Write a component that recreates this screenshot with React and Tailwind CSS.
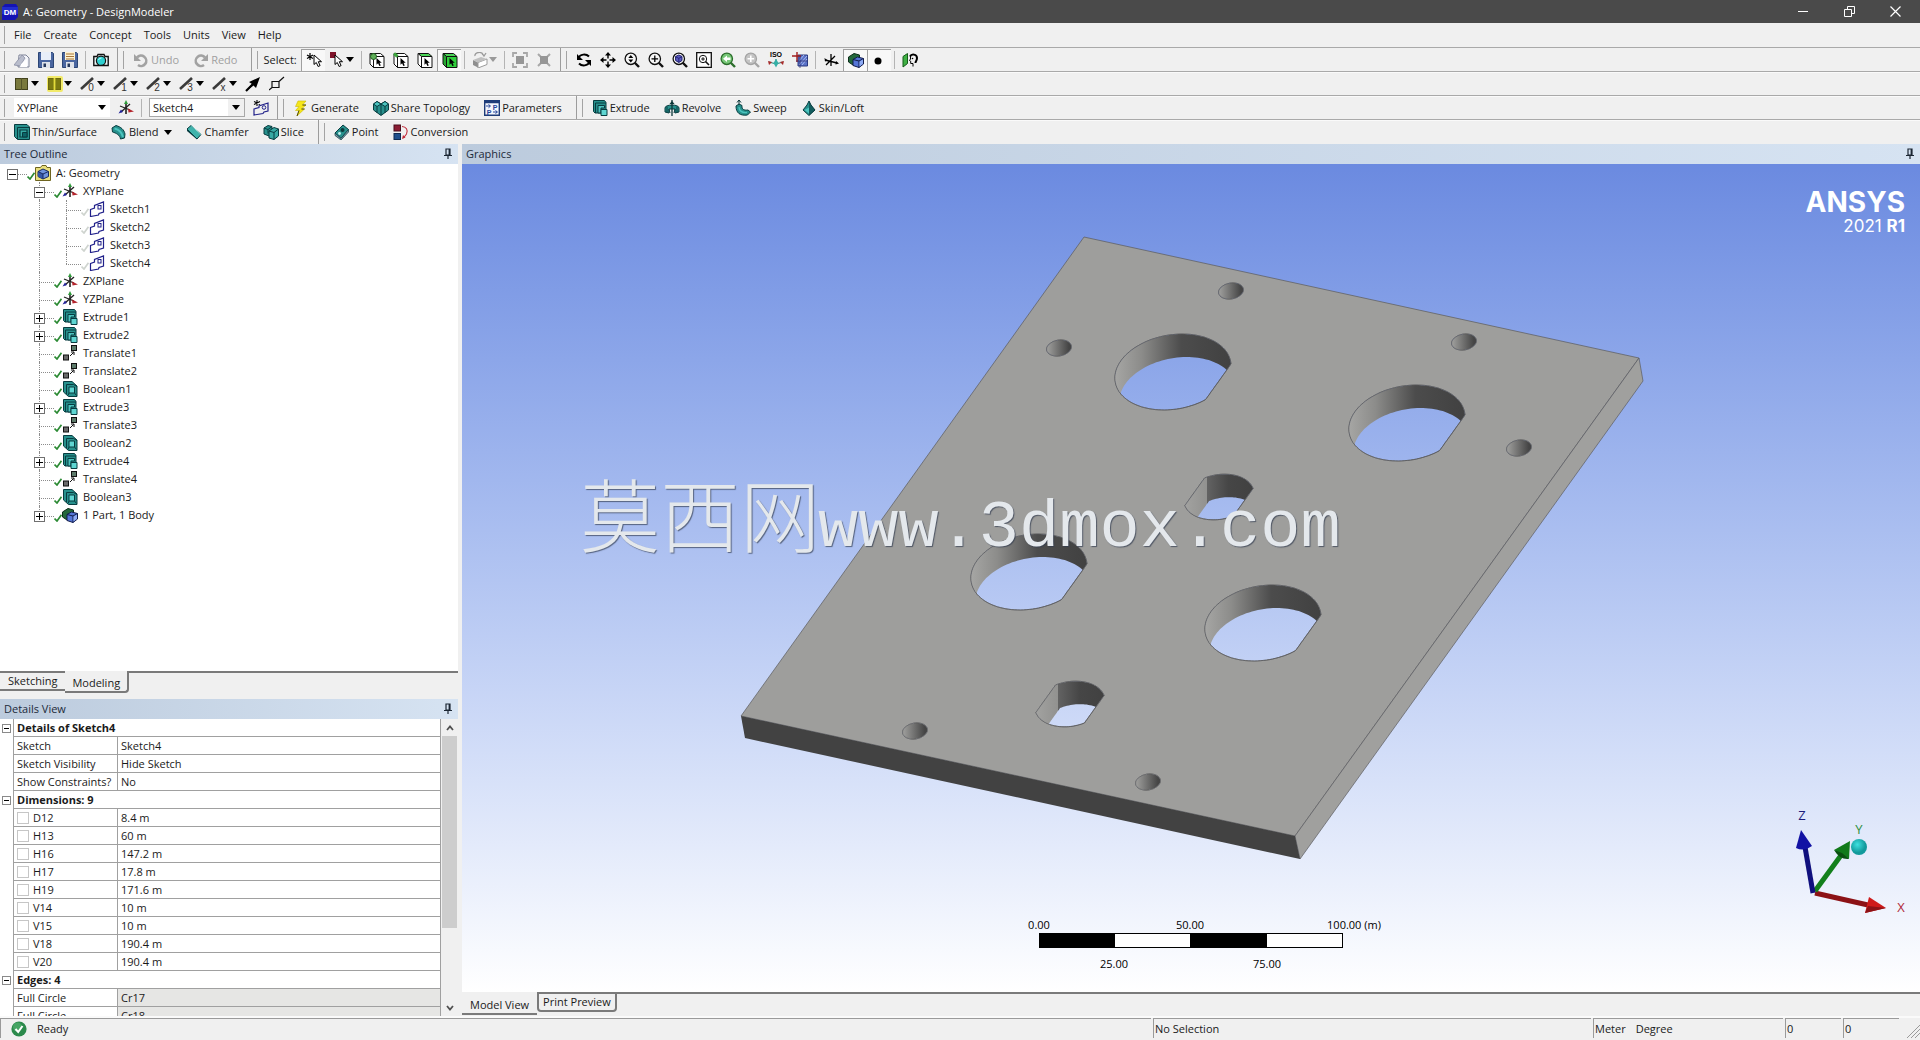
import React from "react";

/* ---------- icon helpers ---------- */
const I = ({ children, w = 16, className = "" }) => (
  <svg width={w} height={16} viewBox={`0 0 ${w} 16`} className={`shrink-0 ${className}`} aria-hidden="true">
    {children}
  </svg>
);
const Caret = ({ color = "#000" }) => (
  <svg width="8" height="5" viewBox="0 0 8 5" className="shrink-0" aria-hidden="true">
    <path d="M0 0h8L4 5z" fill={color} />
  </svg>
);

const TEAL = "#27908c";
const TEAL_D = "#083c40";
const TEAL_L = "#4cc4bf";

const NewIcon = () => (
  <I>
    <path d="M5 3h7l3 3v9H4z" fill="#f4f5fa" stroke="#7c8296" />
    <path d="M0 13L8 3l3 3-5 8z" fill="#b9bdcc" stroke="#8a8fa3" strokeWidth=".8" />
    <path d="M7 12l6-5v8H6z" fill="#fff" />
  </I>
);
const SaveIcon = ({ all }) => (
  <I>
    <path d="M.5.5h14l1 1v14H.5z" fill="#4a66a0" stroke="#2c4675" />
    <path d="M3 0h10v8H3z" fill={all ? "#fff3d0" : "#e8eef8"} />
    {all && <path d="M4 2h8M4 4.500h8M4 7h8" stroke="#a8763a" strokeWidth="1.200" />}
    <path d="M4 10h8v6H4z" fill="#dfe3ea" />
    <path d="M5.500 11.500h2.500v3.500h-2.500z" fill="#26385c" />
  </I>
);
const CameraIcon = () => (
  <I>
    <path d="M.8 4.500h3.200l1-2h6l1 2h3.200v9H.8z" fill="#e9f6f6" stroke="#111" strokeWidth="1.400" />
    <circle cx="8" cy="8.800" r="4.600" fill="#2fd0d0" stroke="#111" strokeWidth="1.200" />
    <path d="M5.500 8a3 3 0 0 1 3-2" stroke="#c8ffff" fill="none" />
  </I>
);
const UndoIcon = ({ redo }) => (
  <I>
    <g transform={redo ? "matrix(-1 0 0 1 16 0)" : undefined} fill="none" stroke="#a2a2a2">
      <path d="M4 5.500a5.200 5.200 0 1 1 1 7.500" strokeWidth="2.600" />
      <path d="M1 2v7h7z" fill="#a2a2a2" stroke="none" />
    </g>
  </I>
);
const arrowPath = "M0 0v9.500l2.300-2 1.800 4 2-.9-1.800-3.900h3.200z";
const SelectCursor = () => (
  <I>
    <path d="M4 1v7M1 3l6 3.500M7 3L1 6.500" stroke="#000" strokeWidth="1.200" />
    <g transform="translate(8 3)"><path d={arrowPath} fill="#fff" stroke="#000" /></g>
  </I>
);
const BoxCursor = () => (
  <I>
    <rect x="1" y="0" width="6" height="6" fill="#7d1128" />
    <g transform="translate(6 3)"><path d={arrowPath} fill="#fff" stroke="#000" /></g>
  </I>
);
const SelCube = ({ mode }) => (
  <I>
    <path d="M4.500 4.500h10.500v11H4.500z" fill={mode === "body" ? "#30cf3c" : "#fff"} stroke="#111" />
    <path d="M4.500 4.500L1 1.500h10.500l3.500 3z" fill={mode === "face" || mode === "body" ? "#4ad456" : "#fff"} stroke="#111" />
    <path d="M1 1.500v10.500l3.500 3.500v-11z" fill={mode === "body" ? "#27a832" : "#fff"} stroke="#111" />
    {mode === "point" && <circle cx="4.500" cy="4.500" r="3" fill="#5fae58" stroke="#1d5a1d" />}
    {mode === "edge" && <path d="M1 1.500l3.500 3" stroke="#3fa63f" strokeWidth="3" />}
    <g transform="translate(7.500 6) scale(.7)"><path d={arrowPath} fill="#000" /></g>
  </I>
);
const GreyCube = () => (
  <I>
    <path d="M1 8l5 2.500v5L1 13z" fill="#8e8e8e" />
    <path d="M6 10.500L15 7v5.500L6 16z" fill="#fff" stroke="#9a9a9a" />
    <path d="M1 8l8-3 6 2-9 3.500z" fill="#c0c0c0" />
    <path d="M3 4a4 3 0 0 1 8-1M10 1l2 3 2-3" stroke="#9a9a9a" fill="none" strokeWidth="1.300" />
  </I>
);
const GreyExpand = ({ inward }) => (
  <I>
    {inward ? (
      <path d="M2 2l3 3M14 2l-3 3M2 14l3-3M14 14l-3-3" stroke="#a8a8a8" strokeWidth="2" />
    ) : (
      <path d="M1 5V1h4M11 1h4v4M15 11v4h-4M5 15H1v-4" stroke="#a8a8a8" strokeWidth="1.800" fill="none" />
    )}
    <rect x="4" y="4" width="8" height="8" fill="#969696" />
  </I>
);
const RotateIcon = () => (
  <I>
    <path d="M2.500 6C4 2 10 1.500 13 4.500M13.500 10C12 14 6 14.500 3 11.500" stroke="#000" strokeWidth="2" fill="none" />
    <path d="M1 2v6h6zM15 14V8H9z" fill="#000" />
  </I>
);
const PanIcon = () => (
  <I>
    <path d="M8 2v12M2 8h12" stroke="#000" strokeDasharray="4.500 3" strokeWidth="1.400" />
    <path d="M8 0l3 3.500H5zM8 16l3-3.500H5zM0 8l3.500-3v6zM16 8l-3.500-3v6z" fill="#000" />
  </I>
);
const Mag = ({ children, ring = "#111", fill = "#f6f6f6" }) => (
  <I>
    <path d="M10.500 10.500L15 15" stroke={ring} strokeWidth="2.400" />
    <circle cx="6.800" cy="6.800" r="5.700" fill={fill} stroke={ring} strokeWidth="1.300" />
    {children}
  </I>
);
const ZoomIcon = () => <Mag><path d="M6.800 3l2.500 3h-5zM6.800 10.600l2.500-3h-5z" fill="#000" /></Mag>;
const ZoomPlus = () => <Mag><path d="M6.800 3.500v6.600M3.500 6.800h6.600" stroke="#000" strokeWidth="1.300" /></Mag>;
const ZoomFit = () => <Mag><path d="M6.800 3l3.200 1.500v4L6.800 10.500 3.600 8.500v-4z" fill="#5a5ac0" stroke="#1c1c6e" /><path d="M3.600 4.800l3.200 1.500L10 4.800M6.800 6.300v4" stroke="#1c1c6e" fill="none" strokeWidth=".8" /></Mag>;
const ZoomPrev = () => <Mag ring="#2c6e2c" fill="#78c878"><path d="M3 6.800l4-3.200v2h3.500v2.500H7v2z" fill="#fff" /></Mag>;
const ZoomNext = () => <Mag ring="#a4a4a4" fill="#c4c4c4"><path d="M6.800 3.500v6.600M3.500 6.800h6.600" stroke="#fff" strokeWidth="1.600" /></Mag>;
const ZoomBox = () => (
  <I>
    <path d="M.7.7h14.600v14.600H.7z" fill="#fff" stroke="#111" strokeWidth="1.300" />
    <circle cx="7" cy="7" r="3.700" fill="none" stroke="#111" />
    <path d="M9.500 9.500l3.500 3.500" stroke="#111" strokeWidth="1.600" />
    <path d="M5.200 7h3.600M7 5.200v3.600" stroke="#111" />
  </I>
);
const IsoIcon = () => (
  <svg width="18" height="16" viewBox="0 0 18 16" className="shrink-0" aria-hidden="true">
    <text x="9" y="5" textAnchor="middle" fontSize="7" fontWeight="700" fontFamily="Liberation Sans">ISO</text>
    <path d="M9 12V7M9 12l-7-2M9 12l7-2" stroke="#2a8f88" strokeWidth="1.200" />
    <path d="M6.500 11L9 7l2.500 4L9 15.500z" fill="#35b0a6" />
    <path d="M1 9l4 1-3 3zM17 9l-4 1 3 3z" fill="#a82a2a" />
  </svg>
);
const LookAt = () => (
  <I>
    <path d="M6 3h9.500v11H6z" fill="#5a72c8" stroke="#2c3a80" />
    <path d="M7 13l8-9M10 13l5-6M7 9l5-6" stroke="#a9bbef" />
    <path d="M5 0v10M0 4h9" stroke="#a01c1c" strokeWidth="1.400" />
    <path d="M8 4v12M4 9h11" stroke="#2a2a6a" strokeWidth=".7" />
  </I>
);
const AxisBlack = () => (
  <I>
    <path d="M8 2v12M2 8l12 3M3 13l9-9" stroke="#000" strokeWidth="1.300" />
    <path d="M1.500 6l3.500 2.500-3 1zM13 9l3 2.500-3.500 1z" fill="#000" />
  </I>
);
const BodyIcon = () => (
  <I>
    <path d="M.5 5L6 1.500l5.500 1.500v6L5 13 .5 10z" fill="#23683b" stroke="#0c2c1a" />
    <path d="M5 7.500l4.500-2.500 6 1.500V12L11 15.500 5 13.500z" fill="#5576d8" stroke="#101b4a" />
    <path d="M5 7.500l6 1.500 4.500-2.500M11 9v6.500" stroke="#101b4a" fill="none" />
    <path d="M11.500 9.500l3.500-2v4.300l-3.500 2.700z" fill="#8eabf4" />
  </I>
);
const DotIcon = () => <I><circle cx="6" cy="9" r="3.500" fill="#000" /></I>;
const FaceIcon = () => (
  <I>
    <path d="M1 4.500l4.500-3v10L1 15z" fill="#3fb044" stroke="#145c18" />
    <path d="M8 4.500c1.500-3 7-2.500 7 1.500 0 3-1.500 3-1.500 5" stroke="#000" strokeWidth="2" fill="none" />
    <path d="M8.500 4v3l-1 1.500 1.200.7v2.300h2.300v3" stroke="#000" fill="none" />
    <circle cx="10.500" cy="6.500" r=".8" fill="#000" />
  </I>
);

const ShareSquare = ({ y }) => (
  <I>
    {y && <rect x="0" y="0" width="16" height="16" rx="2" fill="#f2ea6a" />}
    <rect x="1.500" y="2.500" width="12" height="11" fill={y ? "#7c7a12" : "#7a7a3e"} stroke={y ? "#6d6a10" : "#43431e"} />
    <path d="M7.500 2v12" stroke={y ? "#e4dc3c" : "#55552a"} strokeWidth={y ? "1.800" : "1"} />
  </I>
);
const EdgeNum = ({ n }) => (
  <I>
    <path d="M1 13L13 2" stroke="#3a3a3a" strokeWidth="2.600" />
    <text x="11" y="15" textAnchor="middle" fontSize="10" fontFamily="Liberation Sans" fill="#333">{n}</text>
  </I>
);
const FatArrow = () => <I><path d="M1 15L7 8 4 6 15 1l-4 11-2.500-2.500z" fill="#000" /><path d="M1 15l7-7" stroke="#000" strokeWidth="2.200" /></I>;
const VertexIcon = () => <I><path d="M3 5.500h7v6H3zM3 11.500L0 14M10 5.500L15 1" fill="none" stroke="#111" strokeWidth="1.200" /></I>;

const AxisIcon = () => (
  <I>
    <path d="M8 2v12" stroke="#222" strokeWidth="1.600" />
    <path d="M8 0l2 4H6z" fill="#2f9a3a" />
    <path d="M2 6l10 4" stroke="#222" strokeWidth="1.300" />
    <path d="M10 8.500l6 3-5.500 1z" fill="#b3242c" />
    <path d="M12 4l-9 8" stroke="#222" strokeWidth="1.300" />
    <path d="M.5 13.500L3 9.500l2 2.500z" fill="#22229a" />
  </I>
);
const SketchNew = () => (
  <I>
    <path d="M4 0v6M1 1.500l6 3M7 1.500l-6 3" stroke="#000" strokeWidth="1.100" />
    <path d="M1 9l5-1.500V6l9-3v8l-4 1-1 1.500-9 1.500z" fill="none" stroke="#23238a" strokeWidth="1.200" />
    <circle cx="11" cy="7.500" r="1.800" fill="none" stroke="#23238a" />
  </I>
);
const BoltIcon = () => (
  <I>
    <path d="M5 1h8L9.500 5H13L8.500 9h3L4 16l2-5.500H2.500L6 6.500H2.500z" fill="#f5e61a" stroke="#c9b806" strokeWidth=".6" />
    <path d="M9.500 5H13M8.500 9h3M6 10.500L4 16" stroke="#3c3600" strokeWidth=".9" />
  </I>
);
const ShareIcon = () => (
  <I>
    <path d="M.5 4L4 1.500 8 4l4-2.500L15.500 4v6L8 15.500.5 10z" fill={TEAL} stroke={TEAL_D} />
    <path d="M.5 4L4 6.500 8 4l4 2.500L15.500 4 12 1.500 8 4 4 1.500z" fill={TEAL_L} stroke={TEAL_D} />
    <path d="M4 6.500V13M12 6.500V13M8 4v11" stroke={TEAL_D} />
  </I>
);
const ParamIcon = () => (
  <I>
    <path d="M.7.7h14.600v14.600H.7z" fill="#f4f6fc" stroke="#1e3c78" strokeWidth="1.400" />
    <path d="M1 2h14" stroke="#1e3c78" strokeWidth="2.500" />
    <path d="M2 6h4M4.500 4.500L6.500 6 4.500 7.800M9 12h4M11.500 10.500l2 1.500-2 1.500" stroke="#23459a" fill="none" />
    <text x="11" y="9.500" textAnchor="middle" fontSize="7" fontWeight="700" fontFamily="Liberation Sans" fill="#23459a">P</text>
    <text x="5" y="15" textAnchor="middle" fontSize="7" fontWeight="700" fontFamily="Liberation Sans" fill="#23459a">P</text>
  </I>
);
const ExtrudeIcon = () => (
  <I>
    <path d="M1.500.5h11l1.500 2V13H3l-1.500-1.500z" fill={TEAL} stroke={TEAL_D} />
    <path d="M3.500 3H14M3.500 3v10" stroke={TEAL_D} />
    <path d="M6 5.500h6.500V8H9v5H6z" fill={TEAL_L} stroke={TEAL_D} />
    <path d="M9 9.500h6v6H9z" fill="#5fd6d2" stroke={TEAL_D} />
  </I>
);
const RevolveIcon = () => (
  <I>
    <path d="M1 8c0-4 14-4 14 0v4l-4 1V9H5v4l-4-1z" fill={TEAL} stroke={TEAL_D} />
    <path d="M5 9l1 4M11 9l-1 4M3 6.500v6M13 6.500v6" stroke={TEAL_D} />
    <path d="M8 0v16" stroke="#0b3638" strokeWidth="1.300" />
    <path d="M8 1L5.500 4h5z" fill="#0b3638" />
  </I>
);
const SweepIcon = () => (
  <I>
    <path d="M1 6l3-2 3 1.500c-.5 4 2 5 6 4.500l2.500 2-3 3C5 16 1 13 1 6z" fill={TEAL} stroke={TEAL_D} />
    <path d="M4 7c0 4 3 6 8 5.500" stroke={TEAL_L} fill="none" strokeWidth="1.400" />
    <path d="M4 5V0M2 2.500L4 0l2 2.500" stroke="#0b3638" fill="none" />
  </I>
);
const LoftIcon = () => (
  <I>
    <path d="M8 1l2 4 4 5-6 5.500L2 10l4-5z" fill={TEAL} stroke={TEAL_D} />
    <path d="M8 1v14.500l6-5.500-4-5z" fill={TEAL_D} opacity=".6" />
    <path d="M3.500 10L8 7.500v6z" fill={TEAL_L} />
  </I>
);
const ThinIcon = () => (
  <I>
    <path d="M.5.5h12.500l2.500 2.500v12.500H3.500L.5 12.500z" fill={TEAL} stroke={TEAL_D} />
    <path d="M3.500 3.500h12M3.500 3.500V15" stroke={TEAL_D} />
    <path d="M6 6h7v7H6z" fill="#37aaa4" stroke={TEAL_D} strokeWidth="1.200" />
    <path d="M8.500 8.500H13V13H8.500z" fill="#0c6468" stroke={TEAL_D} />
  </I>
);
const BlendIcon = () => (
  <I>
    <path d="M1 4l4-2.500c5 1.500 8 4 9 8.500l-.5 4-4 1C9 11 5 9 1.500 8z" fill={TEAL} stroke={TEAL_D} />
    <path d="M3.500 4.500c4.500 1 7.500 4 8.500 8.500" stroke={TEAL_L} strokeWidth="2" fill="none" />
  </I>
);
const ChamferIcon = () => (
  <I>
    <path d="M1 5l4-3.500 10 9-4 4.500z" fill="#3fb3ac" stroke={TEAL_D} />
    <path d="M5 1.500l10 9" stroke="#8ce0da" />
    <path d="M1 5v2l10 8.500V15z" fill={TEAL_D} />
  </I>
);
const SliceIcon = () => (
  <I>
    <path d="M1 4l4-2.500 4 1V10l-3 2-5-2z" fill={TEAL} stroke={TEAL_D} />
    <path d="M6 7l5-3.500L15.500 5v7L11 15.500 6 14z" fill="#37aaa4" stroke={TEAL_D} />
    <path d="M6 7l5 1.500L15.500 5M11 8.500v7M1 4l4 1.500 4-3M5 5.500v4" stroke={TEAL_D} fill="none" />
  </I>
);
const PointIcon = () => (
  <I>
    <path d="M1 9L9 1l5.500 4.500L7 14.500z" fill={TEAL} stroke={TEAL_D} />
    <path d="M1 9v2.500l6 4.500 7.500-8V5.500L7 14.500z" fill="#7d98a8" stroke={TEAL_D} strokeWidth=".7" />
    <circle cx="8.500" cy="6" r="2" fill="#0c3a3c" />
    <circle cx="5.500" cy="9.500" r="1.400" fill="#c8f0ee" />
  </I>
);
const ConversionIcon = () => (
  <I>
    <rect x="1" y="1" width="6.500" height="6" fill="#8b1d34" stroke="#4a0d1b" />
    <rect x="1" y="9.500" width="6.500" height="6" fill="#1f4f8c" stroke="#0f2a50" />
    <path d="M9 2.500c4 0 6.500 3.500 4.500 7.500l-3 4" stroke="#c22b3a" fill="none" strokeWidth="1.100" />
    <path d="M9 15l1-4 2.500 2.500z" fill="#c22b3a" />
  </I>
);
const TranslateIcon = () => (
  <I>
    <rect x="9.500" y=".5" width="5" height="5" fill="#5c7a6a" stroke="#111" />
    <rect x="1.500" y="10" width="5" height="5" fill="#6a6a6a" stroke="#111" />
    <path d="M8 11l3.500-3.500M9 7h3v3" stroke="#111" fill="none" />
  </I>
);
const BooleanIcon = () => (
  <I>
    <path d="M1.500.5h8.500l5 4.500v10.500H6.500L1.500 11z" fill={TEAL} stroke={TEAL_D} />
    <path d="M4.500 3.500h7l3.500 2M4.500 3.500V13" stroke={TEAL_D} fill="none" />
    <path d="M7 6h5.500v6H7z" fill="#5fd6d2" stroke={TEAL_D} />
    <path d="M7 12l-1 2.500M12.500 12l2 2.500" stroke={TEAL_D} />
  </I>
);
const SketchIcon = () => (
  <I>
    <path d="M1.500 8.500l4-1.500V4.500l9-3.500v10l-4.500 1.500-.5 1.500-8 1.500z" fill="#fff" stroke="#20208a" strokeWidth="1.200" />
    <rect x="9" y="4.500" width="3" height="3.500" fill="none" stroke="#20208a" />
  </I>
);
const GeometryIcon = () => (
  <I>
    <path d="M.5 2.500h5l1.500-2h4l1 2h3.500v13H.5z" fill="#e9df7c" stroke="#6e6420" />
    <path d="M3 6.500L8 4l5.500 2.500v5L8 14l-5-2.500z" fill="#6f92dc" stroke="#182a60" />
    <path d="M3 6.500L8 9v5l-5-2.500z" fill="#3557a8" />
    <path d="M3 6.500L8 9l5.500-2.500M8 9v5" stroke="#182a60" fill="none" />
  </I>
);
const PinIcon = () => (
  <svg width="10" height="12" viewBox="0 0 10 12" aria-hidden="true">
    <path d="M3 1h4v6H3zM1 7.500h8M5 7.500V11M6.200 1v6" stroke="#1b2633" strokeWidth="1.200" fill="none" />
  </svg>
);
const Check = ({ pale }) => (
  <svg width="8" height="8" viewBox="0 0 8 8" className="mt-1.5 shrink-0" aria-hidden="true">
    <path d="M.5 4.500L3 7 7.500.8" stroke={pale ? "#cfd4cf" : "#2c8a34"} strokeWidth="1.700" fill="none" />
  </svg>
);

/* ---------- toolbar parts ---------- */
const Grip = () => (
  <span className="flex h-full w-2.5 shrink-0 items-center pl-1"><span className="h-[18px] w-px bg-[#a3a3a3]" /></span>
);
const Sep = () => (
  <span className="flex h-full w-[7px] shrink-0 items-center justify-center"><span className="h-[18px] w-px bg-[#b4b4b4]" /></span>
);
const Break = () => (
  <span className="flex h-full w-4 shrink-0 items-center gap-[5px] pl-1">
    <span className="h-full w-px bg-[#9c9c9c]" />
    <span className="h-[18px] w-px bg-[#a3a3a3]" />
  </span>
);
const IB = ({ label, children, active }) => (
  <button
    type="button"
    aria-label={label}
    className={`flex h-[22px] w-6 shrink-0 items-center justify-center ${active ? "border-l border-t border-[#a0a0a0] bg-[#f8f8f8]" : ""}`}
  >
    {children}
  </button>
);
const DB = ({ label, children, color }) => (
  <button type="button" aria-label={label} className="flex h-[22px] w-[33px] shrink-0 items-center gap-px pl-1">
    {children}
    <Caret color={color} />
  </button>
);
const LB = ({ icon, children, disabled, caret }) => (
  <button type="button" disabled={disabled} className="flex h-[22px] shrink-0 items-center gap-0.5 whitespace-nowrap pl-1 pr-2.5 disabled:text-[#a0a0a0]">
    {icon}
    <span>{children}</span>
    {caret && <span className="pl-1"><Caret /></span>}
  </button>
);
const Row = ({ children }) => (
  <div className="flex h-6 items-center border-b border-[#a9a9a9] shadow-[0_1px_0_#fafafa]">{children}</div>
);
const Combo = ({ label, value, boxed }) => (
  <span className={`relative flex h-[19px] w-24 shrink-0 items-center bg-white ${boxed ? "border border-[#a8a8a8]" : ""}`}>
    <select aria-label={label} className="h-full w-full appearance-none bg-transparent pl-[3px] outline-none">
      <option>{value}</option>
    </select>
    <span className={`pointer-events-none absolute right-0 flex h-full w-4 items-center justify-center ${boxed ? "bg-[#f0f0f0]" : ""}`}>
      <Caret />
    </span>
  </span>
);

const PanelHeader = ({ title }) => (
  <div className="flex h-5 shrink-0 items-center justify-between bg-linear-to-r from-[#bccbdd] to-[#d6e3f2] pl-1 pr-[5px] text-[#1c2a3a]">
    <h2>{title}</h2>
    <button type="button" aria-label={`Pin ${title}`}><PinIcon /></button>
  </div>
);

/* ---------- tree ---------- */
const ICONS = { axis: AxisIcon, sketch: SketchIcon, extrude: ExtrudeIcon, translate: TranslateIcon, boolean: BooleanIcon, body: BodyIcon, geometry: GeometryIcon };
const TREE = [
  { d: 0, t: "A: Geometry", i: "geometry", x: "-" },
  { d: 1, t: "XYPlane", i: "axis", x: "-" },
  { d: 2, t: "Sketch1", i: "sketch" },
  { d: 2, t: "Sketch2", i: "sketch" },
  { d: 2, t: "Sketch3", i: "sketch" },
  { d: 2, t: "Sketch4", i: "sketch", last: true },
  { d: 1, t: "ZXPlane", i: "axis" },
  { d: 1, t: "YZPlane", i: "axis" },
  { d: 1, t: "Extrude1", i: "extrude", x: "+" },
  { d: 1, t: "Extrude2", i: "extrude", x: "+" },
  { d: 1, t: "Translate1", i: "translate" },
  { d: 1, t: "Translate2", i: "translate" },
  { d: 1, t: "Boolean1", i: "boolean" },
  { d: 1, t: "Extrude3", i: "extrude", x: "+" },
  { d: 1, t: "Translate3", i: "translate" },
  { d: 1, t: "Boolean2", i: "boolean" },
  { d: 1, t: "Extrude4", i: "extrude", x: "+" },
  { d: 1, t: "Translate4", i: "translate" },
  { d: 1, t: "Boolean3", i: "boolean" },
  { d: 1, t: "1 Part, 1 Body", i: "body", x: "+", last: true },
];
const Guide = ({ vertical, last, branch, box }) => (
  <span className="relative h-[18px] w-[27px] shrink-0">
    {vertical && <span className={`absolute left-3 top-0 border-l border-dotted border-[#8c8c8c] ${last ? "h-2.5" : "h-[18px]"}`} />}
    {branch && <span className="absolute left-3 right-0 top-2.5 border-t border-dotted border-[#8c8c8c]" />}
    {box && (
      <button type="button" aria-label={box === "+" ? "Expand" : "Collapse"} className="absolute left-[7px] top-[5px] h-[11px] w-[11px] border border-[#707070] bg-white">
        <span className="absolute left-px right-px top-1 h-px bg-black" />
        {box === "+" && <span className="absolute bottom-px left-1 top-px w-px bg-black" />}
      </button>
    )}
  </span>
);
const TreeRow = ({ n }) => {
  const Ic = ICONS[n.i];
  return (
    <li className="flex h-[18px] items-center">
      {n.d > 0 && <Guide />}
      {n.d > 1 && <Guide vertical />}
      <Guide vertical={n.d > 0} last={n.last} branch box={n.x} />
      <Check pale={n.d > 1} />
      <Ic />
      <span className="pl-[5px]">{n.t}</span>
    </li>
  );
};

/* ---------- details ---------- */
const DETAILS = [
  { h: "Details of Sketch4" },
  { k: "Sketch", v: "Sketch4" },
  { k: "Sketch Visibility", v: "Hide Sketch" },
  { k: "Show Constraints?", v: "No" },
  { h: "Dimensions: 9" },
  { k: "D12", v: "8.4 m", c: true },
  { k: "H13", v: "60 m", c: true },
  { k: "H16", v: "147.2 m", c: true },
  { k: "H17", v: "17.8 m", c: true },
  { k: "H19", v: "171.6 m", c: true },
  { k: "V14", v: "10 m", c: true },
  { k: "V15", v: "10 m", c: true },
  { k: "V18", v: "190.4 m", c: true },
  { k: "V20", v: "190.4 m", c: true },
  { h: "Edges: 4" },
  { k: "Full Circle", v: "Cr17", g: true },
  { k: "Full Circle", v: "Cr18", g: true },
];
const Details = () => (
  <div className="flex h-[297px] overflow-hidden bg-white">
    <div className="min-w-0 flex-1 overflow-hidden">
      <table className="w-full table-fixed border-separate border-spacing-0">
        <colgroup>
          <col className="w-3.5" />
          <col className="w-[104px]" />
          <col />
        </colgroup>
        <tbody>
          {DETAILS.map((r, i) => (
            <tr key={i} className="h-[18px]">
              <td className="border-r border-[#a0a0a0] p-0 pl-0.5">
                {r.h && (
                  <button type="button" aria-label={`Collapse ${r.h}`} className="flex h-[9px] w-[9px] items-center justify-center border border-[#8a8a8a]">
                    <span className="h-px w-[5px] bg-black" />
                  </button>
                )}
              </td>
              {r.h ? (
                <th colSpan={2} className="border-b border-r border-[#a0a0a0] p-0 pl-[3px] text-left font-bold leading-4">{r.h}</th>
              ) : (
                <>
                  <td className="whitespace-nowrap border-b border-r border-[#a0a0a0] p-0 pl-[3px] leading-4">
                    {r.c ? (
                      <label className="flex items-center gap-1">
                        <input type="checkbox" className="h-3 w-3 appearance-none border border-[#c6c6c6] bg-white" />
                        {r.k}
                      </label>
                    ) : r.k}
                  </td>
                  <td className={`border-b border-r border-[#a0a0a0] p-0 pl-[3px] leading-4 ${r.g ? "bg-[#e6e6e4]" : ""}`}>{r.v}</td>
                </>
              )}
            </tr>
          ))}
        </tbody>
      </table>
    </div>
    <div className="flex w-[17px] shrink-0 flex-col items-center bg-[#f0f0f0]">
      <button type="button" aria-label="Scroll up" className="flex h-[17px] items-center">
        <svg width="8" height="6" viewBox="0 0 8 6"><path d="M1 5l3-3.500L7 5" stroke="#505050" strokeWidth="1.800" fill="none" /></svg>
      </button>
      <div className="h-48 w-[15px] bg-[#cdcdcd]" />
      <div className="flex-1" />
      <button type="button" aria-label="Scroll down" className="flex h-[17px] items-center">
        <svg width="8" height="6" viewBox="0 0 8 6"><path d="M1 1l3 3.500L7 1" stroke="#505050" strokeWidth="1.800" fill="none" /></svg>
      </button>
    </div>
  </div>
);

/* ---------- model ---------- */
const U = [2.694, 0.587];
const V = [-1.345, 1.878];
const DEPTH = [4.5, 23];

/* Outline of a round hole of radius r, flattened where u leaves [lo, hi]. */
const holePath = (cx, cy, r, lo, hi, dx = 0, dy = 0) => {
  const pts = [];
  for (let i = 0; i < 120; i++) {
    const a = (i / 120) * Math.PI * 2;
    const u = Math.min(hi, Math.max(lo, r * Math.cos(a)));
    const v = r * Math.sin(a);
    const x = cx + u * U[0] + v * V[0] + dx;
    const y = cy + u * U[1] + v * V[1] + dy;
    pts.push(`${x.toFixed(1)} ${y.toFixed(1)}`);
  }
  return `M${pts.join("L")}Z`;
};
const HOLES = [
  [1173, 372, 19.3, -99, 16.8],
  [1407, 423, 19.3, -99, 16.8],
  [1029, 572, 19.3, -99, 16.8],
  [1263, 623, 19.3, -99, 16.8],
  [1219, 497, 11.6, -9, 9],
  [1070, 704, 11.6, -9, 9],
  [1231, 291, 4.1, -9, 9],
  [1059, 348, 4.1, -9, 9],
  [1464, 342, 4.1, -9, 9],
  [1519, 448, 4.1, -9, 9],
  [915, 731, 4.1, -9, 9],
  [1148, 782, 4.1, -9, 9],
];
const SHAPES = HOLES.map((h) => ({ r: h[2], top: holePath(...h), low: holePath(...h, ...DEPTH) }));

const Model = () => (
  <svg viewBox="462 164 1458 828" className="absolute inset-0 h-full w-full" role="img" aria-label="Plate model">
    <defs>
      <linearGradient id="wall">
        <stop offset="0" stopColor="#a6a6a4" />
        <stop offset=".22" stopColor="#8c8c8a" />
        <stop offset=".55" stopColor="#4c4c4c" />
        <stop offset="1" stopColor="#404040" />
      </linearGradient>
      <linearGradient id="slot">
        <stop offset="0" stopColor="#a2a2a0" />
        <stop offset=".3" stopColor="#929290" />
        <stop offset=".31" stopColor="#626262" />
        <stop offset=".6" stopColor="#464646" />
        <stop offset="1" stopColor="#404040" />
      </linearGradient>
      <linearGradient id="small">
        <stop offset="0" stopColor="#a0a09e" />
        <stop offset=".9" stopColor="#454545" />
      </linearGradient>
      <radialGradient id="ball" cx=".4" cy=".35">
        <stop offset="0" stopColor="#3fe0e0" />
        <stop offset="1" stopColor="#129a9c" />
      </radialGradient>
      {SHAPES.map((s, i) => (
        <clipPath key={i} id={`hole${i}`}><path d={s.top} /></clipPath>
      ))}
    </defs>
    <path
      d={`M1084 237L1639 358L1295 836L741 716Z${SHAPES.map((s) => s.top).join("")}`}
      fill="#9e9e9c" fillRule="evenodd" stroke="#5a5a5c" strokeWidth=".7"
    />
    <path d="M1639 358L1643 381L1300 859L1295 836Z" fill="#a0a09e" stroke="#5c5c60" strokeWidth=".7" />
    <path d="M741 716L1295 836L1300 859L745 738Z" fill="#424242" />
    {SHAPES.map((s, i) => (
      <g key={i}>
        <path
          d={s.r > 5 ? s.top + s.low : s.top}
          fillRule="evenodd"
          clipPath={`url(#hole${i})`}
          fill={s.r > 15 ? "url(#wall)" : s.r > 5 ? "url(#slot)" : "url(#small)"}
        />
        <path d={s.top} fill="none" stroke="#5a5a5c" strokeWidth=".6" />
      </g>
    ))}

    {/* scale ruler */}
    <g fontFamily="Open Sans" fontSize="11" fill="#000" textAnchor="middle">
      <rect x="1039.500" y="933.500" width="303" height="14" fill="#fff" stroke="#000" />
      <path d="M1039 933h76v15h-76zM1190 933h77v15h-77z" />
      <text x="1039" y="929">0.00</text>
      <text x="1190" y="929">50.00</text>
      <text x="1354" y="929">100.00 (m)</text>
      <text x="1114" y="968">25.00</text>
      <text x="1267" y="968">75.00</text>
    </g>

    {/* axis triad */}
    <path d="M1815 893L1868 905" stroke="#8c1216" strokeWidth="5" />
    <path d="M1869 897L1886 908L1865 913Z" fill="#cf1a1a" />
    <path d="M1865 913L1886 908L1868 906Z" fill="#8c1216" />
    <path d="M1815 891L1842 854" stroke="#13801c" strokeWidth="5" />
    <path d="M1850 841L1849 859L1834 850Z" fill="#117a1a" />
    <path d="M1834 850Q1840 860 1849 859L1842 853Z" fill="#0a4f10" />
    <path d="M1813 893L1805 847" stroke="#10107e" strokeWidth="5" />
    <path d="M1801 830L1812 846Q1804 852 1796 848Z" fill="#1212a4" />
    <circle cx="1859" cy="847" r="8" fill="url(#ball)" />
    <g fontFamily="Open Sans" fontSize="13" textAnchor="middle">
      <text x="1802" y="820" fill="#1c1c7a">Z</text>
      <text x="1859" y="834" fill="#2f8f3c">Y</text>
      <text x="1901" y="912" fill="#b02a3a">X</text>
    </g>

    {/* watermark */}
    <g fill="#e4e8ec" className="[text-shadow:1px_1px_1px_rgba(50,60,80,0.7)]">
      <text x="580" y="546" fontSize="80" fontWeight="300" fontFamily="Noto Sans CJK SC, sans-serif">莫西网</text>
      <text x="818" y="546" fontSize="67" fontFamily="Liberation Mono, monospace">www.3dmox.com</text>
    </g>
  </svg>
);

export default function App() {
  return (
    <div className="flex h-screen min-h-[640px] flex-col overflow-hidden bg-[#f0f0f0] font-['Open_Sans','Noto_Sans_CJK_SC',sans-serif] text-[11px] leading-4 text-[#1a1a1a]">
      <header className="flex h-[23px] shrink-0 items-center bg-[#4a4a4a] text-white">
        <svg width="16" height="16" viewBox="0 0 16 16" className="ml-0.5" aria-hidden="true">
          <path d="M3 0h11l2 3v10l-3 3H0V3z" fill="#1414b4" />
          <path d="M0 3h16v7H0z" fill="#2b3fe0" opacity=".6" />
          <text x="8" y="11" textAnchor="middle" fontSize="8" fontWeight="700" fontFamily="Liberation Sans" fill="#fff">DM</text>
        </svg>
        <h1 className="pl-[5px]">A: Geometry - DesignModeler</h1>
        <div className="ml-auto flex h-full pr-0.5">
          <button type="button" aria-label="Minimize" className="flex w-[46px] items-center justify-center"><svg width="10" height="10"><path d="M0 4.500h10" stroke="#fff" /></svg></button>
          <button type="button" aria-label="Restore" className="flex w-[46px] items-center justify-center"><svg width="11" height="11" fill="none" stroke="#fff"><path d="M.5 3.500h7v7h-7zM3.500 3V.5h7v7H8" /></svg></button>
          <button type="button" aria-label="Close" className="flex w-[46px] items-center justify-center"><svg width="11" height="11"><path d="M.5.5l10 10M10.500.5l-10 10" stroke="#fff" strokeWidth="1.200" /></svg></button>
        </div>
      </header>

      <nav className="flex h-[25px] shrink-0 items-center border-b border-[#a9a9a9]">
        <Grip />
        <div className="flex gap-3 pl-1">
          {["File", "Create", "Concept", "Tools", "Units", "View", "Help"].map((m) => (
            <button key={m} type="button">{m}</button>
          ))}
        </div>
      </nav>

      <div className="shrink-0">
        <Row>
          <Grip />
          <IB label="New"><NewIcon /></IB>
          <IB label="Save"><SaveIcon /></IB>
          <IB label="Save project"><SaveIcon all /></IB>
          <Sep />
          <IB label="Image capture"><CameraIcon /></IB>
          <Break />
          <LB icon={<UndoIcon />} disabled>Undo</LB>
          <LB icon={<UndoIcon redo />} disabled>Redo</LB>
          <Break />
          <span className="w-[38px] shrink-0">Select:</span>
          <IB label="New selection" active><SelectCursor /></IB>
          <DB label="Select mode"><BoxCursor /></DB>
          <Sep />
          <IB label="Points"><SelCube mode="point" /></IB>
          <IB label="Edges"><SelCube mode="edge" /></IB>
          <IB label="Faces"><SelCube mode="face" /></IB>
          <IB label="Bodies" active><SelCube mode="body" /></IB>
          <Sep />
          <DB label="Extend selection" color="#9a9a9a"><GreyCube /></DB>
          <Sep />
          <IB label="Expand face selection"><GreyExpand /></IB>
          <IB label="Shrink face selection"><GreyExpand inward /></IB>
          <Break />
          <IB label="Rotate"><RotateIcon /></IB>
          <IB label="Pan"><PanIcon /></IB>
          <IB label="Zoom"><ZoomIcon /></IB>
          <IB label="Box zoom"><ZoomPlus /></IB>
          <IB label="Zoom to fit"><ZoomFit /></IB>
          <IB label="Magnifier window"><ZoomBox /></IB>
          <IB label="Previous view"><ZoomPrev /></IB>
          <IB label="Next view"><ZoomNext /></IB>
          <IB label="ISO view"><IsoIcon /></IB>
          <IB label="Look at"><LookAt /></IB>
          <Sep />
          <IB label="Display plane"><AxisBlack /></IB>
          <IB label="Display model" active><BodyIcon /></IB>
          <IB label="Display points" active><DotIcon /></IB>
          <Sep />
          <IB label="Look at face"><FaceIcon /></IB>
        </Row>
        <Row>
          <Grip />
          <DB label="Face color"><ShareSquare /></DB>
          <DB label="Edge color"><ShareSquare y /></DB>
          {["0", "1", "2", "3", "x"].map((n) => (
            <DB key={n} label={`Edge joints ${n}`}><EdgeNum n={n} /></DB>
          ))}
          <IB label="Edge direction"><FatArrow /></IB>
          <IB label="Vertices"><VertexIcon /></IB>
        </Row>
        <Row>
          <Grip />
          <div className="flex items-center gap-1 pl-1">
            <Combo label="Active plane" value="XYPlane" />
            <IB label="New plane"><AxisIcon /></IB>
          </div>
          <Sep />
          <div className="flex items-center gap-1 pl-1">
            <Combo label="Active sketch" value="Sketch4" boxed />
            <IB label="New sketch"><SketchNew /></IB>
          </div>
          <Break />
          <LB icon={<BoltIcon />}>Generate</LB>
          <LB icon={<ShareIcon />}>Share Topology</LB>
          <LB icon={<ParamIcon />}>Parameters</LB>
          <Break />
          <LB icon={<ExtrudeIcon />}>Extrude</LB>
          <LB icon={<RevolveIcon />}>Revolve</LB>
          <LB icon={<SweepIcon />}>Sweep</LB>
          <LB icon={<LoftIcon />}>Skin/Loft</LB>
        </Row>
        <div className="flex h-6 items-center">
          <Grip />
          <LB icon={<ThinIcon />}>Thin/Surface</LB>
          <LB icon={<BlendIcon />} caret>Blend</LB>
          <LB icon={<ChamferIcon />}>Chamfer</LB>
          <LB icon={<SliceIcon />}>Slice</LB>
          <Break />
          <LB icon={<PointIcon />}>Point</LB>
          <LB icon={<ConversionIcon />}>Conversion</LB>
        </div>
      </div>

      <main className="flex min-h-0 flex-1 gap-1">
        <aside className="flex w-[458px] shrink-0 flex-col">
          <PanelHeader title="Tree Outline" />
          <ul className="min-h-0 flex-1 overflow-hidden bg-white">
            {TREE.map((n) => <TreeRow key={n.t} n={n} />)}
          </ul>
          <div className="flex h-7 shrink-0 items-start">
            <button type="button" className="h-5 border-b-2 border-t-2 border-[#7a7a7a] px-2 leading-4">Sketching</button>
            <button type="button" className="h-[22px] rounded-br-sm border-b-2 border-r-2 border-[#7a7a7a] px-[7px] pt-1 leading-4">Modeling</button>
            <span className="flex-1 border-t-2 border-[#7a7a7a]" />
          </div>
          <PanelHeader title="Details View" />
          <Details />
        </aside>

        <section className="flex min-w-0 flex-1 flex-col">
          <PanelHeader title="Graphics" />
          <div className="relative min-h-0 flex-1 overflow-hidden bg-linear-to-b from-[#6b8ae0] to-white">
            <Model />
            <div className="absolute right-[15px] top-6 text-right font-['Inter',sans-serif] text-white">
              <p className="text-[28px] font-bold leading-7">ANSYS</p>
              <p className="text-[17px] leading-5">2021 <b>R1</b></p>
            </div>
          </div>
          <div className="flex h-6 shrink-0 items-start">
            <button type="button" className="h-[23px] border-b-2 border-[#7a7a7a] px-2 pt-1 leading-4">Model View</button>
            <button type="button" className="h-5 rounded-b-sm border-2 border-[#7a7a7a] px-1 leading-4">Print Preview</button>
            <span className="flex-1 border-t-2 border-[#7a7a7a]" />
          </div>
        </section>
      </main>

      <footer className="flex h-6 shrink-0 items-stretch gap-0.5 border-t-2 border-t-[#fafafa] pb-0.5">
        <div className="flex flex-1 items-center gap-2.5 border-l border-t border-[#9a9a9a] pl-2.5">
          <svg width="16" height="16" viewBox="0 0 16 16" aria-hidden="true">
            <circle cx="8" cy="8" r="7.600" fill="#2c8a4c" />
            <circle cx="6.500" cy="6" r="4.500" fill="#58b874" opacity=".6" />
            <path d="M4.500 8l2.700 3L11.500 5" stroke="#fff" strokeWidth="2" fill="none" />
          </svg>
          Ready
        </div>
        <div className="flex w-[438px] items-center border-l border-t border-[#9a9a9a] pl-px">No Selection</div>
        <div className="flex w-[190px] items-center gap-2.5 border-l border-t border-[#9a9a9a] pl-px"><span>Meter</span><span>Degree</span></div>
        <div className="flex w-14 items-center border-l border-t border-[#9a9a9a] pl-px">0</div>
        <div className="flex w-14 items-center border-l border-t border-[#9a9a9a] pl-px">0</div>
        <div className="flex w-[19px] items-end justify-end">
          <svg width="14" height="14" aria-hidden="true"><path d="M1 14L14 1M5 14l9-9M9 14l5-5" stroke="#9a9a9a" /></svg>
        </div>
      </footer>
    </div>
  );
}
